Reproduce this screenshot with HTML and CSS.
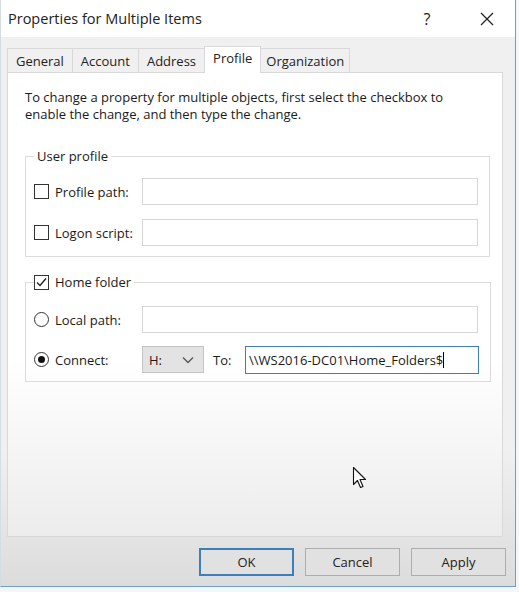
FILE: index.html
```
<!DOCTYPE html>
<html>
<head>
<meta charset="utf-8">
<link rel="stylesheet" href="styles.css">
</head>
<body>
<div class="window">
  <div class="titlebar">
    <span class="title">Properties for Multiple Items</span>
    <span class="help">?</span>
    <span class="close"><svg width="16" height="16" viewBox="0 0 16 16"><path d="M2 2 L14 14 M14 2 L2 14" stroke="#222" stroke-width="1.3" fill="none"/></svg></span>
  </div>
  <div class="body">
    <div class="tabs">
      <div class="tab">General</div>
      <div class="tab">Account</div>
      <div class="tab">Address</div>
      <div class="tab active">Profile</div>
      <div class="tab last">Organization</div>
    </div>
    <div class="panel">
      <p class="intro">To change a property for multiple objects, first select the checkbox to<br>enable the change, and then type the change.</p>
      <fieldset class="group g1">
        <legend class="legend-text">User profile</legend>
        <div class="row">
          <label class="lbl"><span class="box"></span>Profile path:</label>
          <div class="input"></div>
        </div>
        <div class="row r2">
          <label class="lbl"><span class="box"></span>Logon script:</label>
          <div class="input"></div>
        </div>
      </fieldset>
      <fieldset class="group g2">
        <legend class="legend-chk"><span class="box"><svg width="13" height="13" viewBox="0 0 13 13"><path d="M2 6.5 L5 9.5 L11 2.5" stroke="#222" stroke-width="1.4" fill="none"/></svg></span>Home folder</legend>
        <div class="row">
          <label class="lbl"><span class="radio"></span>Local path:</label>
          <div class="input"></div>
        </div>
        <div class="row r3">
          <label class="lbl"><span class="radio on"></span>Connect:</label>
          <div class="select"><span>H:</span><svg width="12" height="8" viewBox="0 0 12 8"><path d="M1 1.5 L6 6.5 L11 1.5" stroke="#555" stroke-width="1.3" fill="none"/></svg></div>
          <span class="to">To:</span>
          <div class="input focus"><span>\\WS2016-DC01\Home_Folders$</span><span class="caret"></span></div>
        </div>
      </fieldset>
    </div>
    <div class="buttons">
      <div class="btn default">OK</div>
      <div class="btn">Cancel</div>
      <div class="btn">Apply</div>
    </div>
  </div>
  <svg class="cursor" width="18" height="25" viewBox="0 0 18 25"><path d="M1.5 1.5 L1.5 18.5 L5.5 14.5 L8.5 21.5 L11 20.5 L8 13.5 L13.5 13.5 Z" fill="#fff" stroke="#111" stroke-width="1.1" stroke-linejoin="round"/></svg>
</div>
</body>
</html>
```
FILE: styles.css
```
* { box-sizing: border-box; }
html, body { margin: 0; padding: 0; background: #f4f6f8; }
body {
  font-family: "Open Sans", "Noto Sans", sans-serif;
  font-size: 13px;
  color: #1a1a1a;
}
.window {
  position: relative;
  width: 516px;
  height: 587px;
  border-right: 1px solid #6d9fc8;
  border-bottom: 1px solid #6d9fc8;
  border-left: 1px solid #d5dde4;
  background: #f0f0f0;
  display: flex;
  flex-direction: column;
}
.titlebar {
  height: 37px;
  background: #fff;
  display: flex;
  align-items: center;
  flex: none;
}
.title {
  flex: 1;
  padding-left: 7px;
  font-size: 14.5px;
  color: #222;
}
.help {
  width: 40px;
  text-align: center;
  font-size: 16px;
  margin-right: 20px;
}
.close {
  width: 40px;
  display: flex;
  justify-content: center;
  margin-right: 8px;
}
.body {
  flex: 1;
  padding: 9px 0 0 6px;
  background: linear-gradient(#f0f0f0 0%, #f0f0f0 75%, #dcdcdc 100%);
}
.tabs {
  display: flex;
  align-items: flex-end;
  height: 26px;
}
.tab {
  height: 24px;
  padding: 0 8px;
  border: 1px solid #d9d9d9;
  border-bottom: none;
  margin-right: -1px;
  background: #f0f0f0;
  display: flex;
  align-items: center;
  color: #222;
}
.tab.last {
  padding: 0 5px;
}
.tab.active {
  height: 27px;
  margin-bottom: -1px;
  background: #fff;
  position: relative;
  z-index: 1;
  padding: 2px 8px 0;
  align-items: flex-start;
}
.panel {
  width: 496px;
  height: 465px;
  border: 1px solid #d9d9d9;
  background: linear-gradient(#fff 0%, #fff 62%, #ececec 100%);
  padding: 16px 0 0 17px;
}
.intro {
  margin: 0 0 25px 0;
  line-height: 17px;
}
.group {
  width: 465px;
  margin: 0;
  border: 1px solid #dcdcdc;
  padding: 13px 11px 10px 8px;
}
.g2 {
  margin-top: 17px;
  padding-top: 15px;
  padding-bottom: 8px;
}
legend {
  line-height: 17px;
}
.legend-text {
  padding: 0 3px;
}
.legend-chk {
  padding: 0 3px 0 0;
  display: flex;
  align-items: center;
}
.row {
  display: flex;
  align-items: center;
  height: 27px;
}
.r2 { margin-top: 14px; }
.r3 { margin-top: 13px; }
.lbl {
  width: 108px;
  display: flex;
  align-items: center;
  flex: none;
}
.box {
  width: 15px;
  height: 15px;
  border: 1px solid #333;
  background: #fff;
  margin-right: 6px;
  flex: none;
  display: flex;
  align-items: center;
  justify-content: center;
}
.radio {
  width: 15px;
  height: 15px;
  border: 1px solid #333;
  border-radius: 50%;
  background: #fff;
  margin-right: 6px;
  flex: none;
  display: flex;
  align-items: center;
  justify-content: center;
}
.radio.on::after {
  content: "";
  width: 7px;
  height: 7px;
  border-radius: 50%;
  background: #111;
}
.input {
  width: 336px;
  height: 27px;
  border: 1px solid #d6d6d6;
  background: #fff;
  flex: none;
}
.select {
  width: 62px;
  height: 27px;
  border: 1px solid #c4c4c4;
  background: #e3e3e3;
  display: flex;
  align-items: center;
  justify-content: space-between;
  padding: 0 9px 0 6px;
  flex: none;
}
.to {
  margin-left: 9px;
  width: 32px;
  flex: none;
}
.input.focus {
  width: 234px;
  height: 28px;
  border: 1px solid #3f7db4;
  display: flex;
  align-items: center;
  padding-left: 3px;
  white-space: nowrap;
  overflow: hidden;
}
.caret {
  display: inline-block;
  width: 1px;
  height: 16px;
  background: #000;
}
.buttons {
  display: flex;
  justify-content: flex-end;
  gap: 11px;
  margin-top: 11px;
  padding-right: 9px;
}
.btn {
  width: 95px;
  height: 28px;
  border: 1px solid #adadad;
  background: #e1e1e1;
  display: flex;
  align-items: center;
  justify-content: center;
  color: #222;
}
.btn.default {
  border: 2px solid #3c7fb9;
}
.cursor {
  position: absolute;
  left: 351px;
  top: 466px;
}
```
